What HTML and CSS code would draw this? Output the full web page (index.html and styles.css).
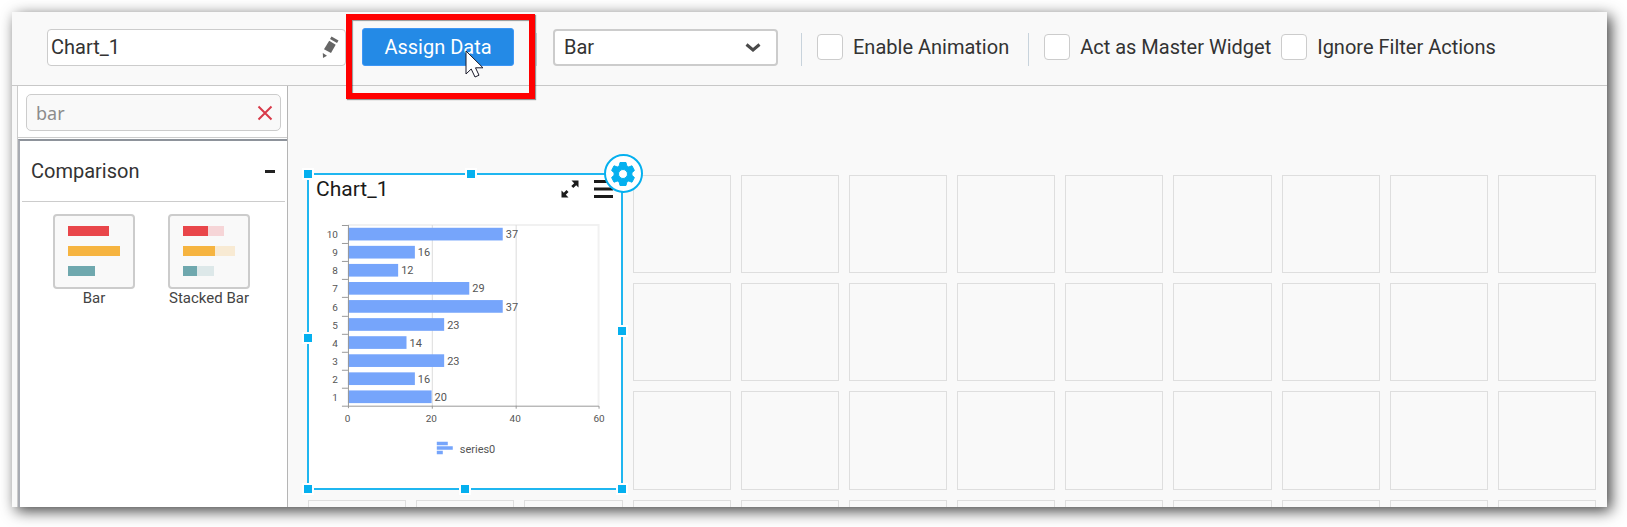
FILE: index.html
```html
<!DOCTYPE html>
<html lang="en">
<head>
<meta charset="utf-8">
<title>Dashboard Designer</title>
<link rel="stylesheet" href="styles.css">
</head>
<body>
<div class="window">
  <header class="toolbar">
    <div class="name-field">
      <input class="name-input" type="text" value="Chart_1" aria-label="Widget name">
      <svg class="pencil" width="18" height="24" viewBox="0 0 18 24" fill="#666" aria-hidden="true">
        <path d="M9.500 .5 16.500 4.500 15 7 8 3z"/><path d="M7.200 4.800 13.700 8.700 9 17 2 13.200z"/><path d="M.8 17 5 19.800 1 22z"/>
      </svg>
    </div>
    <div class="assign">
      <button class="assign-button" type="button">Assign Data</button>
      <span class="highlight"></span>
      <svg class="cursor" width="20" height="29" viewBox="0 0 20 29" aria-hidden="true">
        <path d="M1 1V24L6.200 19 10 27 14 25.200 10.500 17.800H18z" fill="#fff" stroke="#1a1a2a" stroke-width="1"/>
      </svg>
    </div>
    <span class="separator"></span>
    <div class="type-field">
      <select class="type-select" aria-label="Chart type"><option>Bar</option><option>Stacked Bar</option></select>
      <svg class="chevron" width="16" height="10" viewBox="0 0 16 10" aria-hidden="true"><path d="M1.500 1.500 8 7l6.500-5.500" fill="none" stroke="#4a4a4a" stroke-width="3"/></svg>
    </div>
    <span class="separator"></span>
    <label class="option"><input class="check" type="checkbox">Enable Animation</label>
    <span class="separator"></span>
    <label class="option"><input class="check" type="checkbox">Act as Master Widget</label>
    <label class="option"><input class="check" type="checkbox">Ignore Filter Actions</label>
  </header>
  <div class="workspace">
    <aside class="sidebar">
      <div class="search">
        <div class="search-box">
          <input class="search-input" type="text" value="bar" aria-label="Search widgets">
          <button class="clear" type="button" aria-label="Clear search">
            <svg width="16" height="16" viewBox="0 0 16 16"><path d="M1.500 1.500 14.500 14.500M14.500 1.500 1.500 14.500" stroke="#d83a4a" stroke-width="2"/></svg>
          </button>
        </div>
      </div>
      <section class="catalog">
        <h2 class="group-title">Comparison
          <button class="collapse" type="button" aria-label="Collapse Comparison"><svg width="10" height="3" viewBox="0 0 10 3"><path d="M0 0h10v3H0z" fill="#222"/></svg></button>
        </h2>
        <div class="tiles">
          <button class="tile" type="button">
            <span class="thumb">
              <svg width="55" height="51" viewBox="0 0 55 51">
                <path d="M0 0h41v10H0z" fill="#e9464a"/><path d="M0 20h52v10H0z" fill="#f6b440"/><path d="M0 40h27v10H0z" fill="#6fa8ae"/>
              </svg>
            </span>
            Bar
          </button>
          <button class="tile" type="button">
            <span class="thumb">
              <svg width="55" height="51" viewBox="0 0 55 51">
                <path d="M0 0h41v10H0z" fill="#f6d5d7"/><path d="M0 20h52v10H0z" fill="#f8ead3"/><path d="M0 40h31v10H0z" fill="#dde8e9"/>
                <path d="M0 0h25v10H0z" fill="#e9464a"/><path d="M0 20h32v10H0z" fill="#f6b440"/><path d="M0 40h14v10H0z" fill="#6fa8ae"/>
              </svg>
            </span>
            Stacked Bar
          </button>
        </div>
      </section>
    </aside>
    <main class="canvas">
      <div class="grid" id="grid">
        <article class="widget">
          <div class="widget-head">
            <h3 class="widget-title">Chart_1</h3>
            <button class="icon-button" type="button" aria-label="Maximize">
              <svg width="18" height="18" viewBox="0 0 18 18" fill="#1a1a1a"><path d="M10.500 .5h7v7l-2.300-2.300-2.900 2.900-2-2 2.900-2.900z"/><path d="M7.500 17.500h-7v-7l2.300 2.300 2.700-2.700 2 2-2.700 2.700z"/></svg>
            </button>
            <button class="icon-button" type="button" aria-label="Widget menu">
              <svg width="19" height="18" viewBox="0 0 19 18" fill="#1a1a1a"><path d="M0 0h19v3H0zM0 7.500h19v3H0zM0 15h19v3H0z"/></svg>
            </button>
          </div>
          <svg class="chart" id="chart" viewBox="309 216 312 250" role="img" aria-label="Bar chart of series0"></svg>
          <i class="handle top-left"></i><i class="handle top"></i><i class="handle left"></i><i class="handle right"></i>
          <i class="handle bottom-left"></i><i class="handle bottom"></i><i class="handle bottom-right"></i>
          <button class="settings" type="button" aria-label="Widget settings">
            <svg width="24" height="24" viewBox="0 0 24 24"><path fill="#05b0ef" fill-rule="evenodd" stroke="#05b0ef" stroke-linejoin="round" d="M9 .5h6l.7 3.300 2 1.200 3.300-1.200 2.400 4.700-2.500 2.200v2.600l2.500 2.200L21 20.200 17.700 19l-2 1.200-.7 3.300H9l-.7-3.300-2-1.200L3 20.200.6 15.500l2.500-2.200v-2.600L.6 8.500 3 3.800 6.300 5l2-1.200zM12 7.500a4.500 4.500 0 1 0 0 9 4.500 4.500 0 0 0 0-9z"/></svg>
          </button>
        </article>
      </div>
    </main>
  </div>
</div>
<script src="script.js"></script>
</body>
</html>
```
FILE: styles.css
```css
* { box-sizing: border-box; }
body { margin: 0; padding: 12px 20px 20px 12px; height: 100vh; background: #fff; color: #333; font-family: Roboto, "Liberation Sans", sans-serif; font-size: 20px; }
button, input, select { font: inherit; color: inherit; margin: 0; }
button { border: 0; padding: 0; background: none; }
svg { display: block; }
.window { height: 100%; display: flex; flex-direction: column; background: #f9f9f9; box-shadow: 4px 4px 14px rgba(0, 0, 0, .75); }

.toolbar { display: flex; align-items: center; padding: 16px 16px 19px 35px; border-bottom: 1px solid #c8c8c8; }
.name-field, .type-field { position: relative; }
.name-field { flex: 0 0 299px; }
.name-input, .type-select { display: block; width: 100%; height: 37px; border: 1px solid #ccc; border-radius: 4px; background: #fff; }
.name-input { padding: 0 36px 0 3px; }
.pencil { position: absolute; right: 6px; top: 7px; }
.assign { position: relative; margin: 0 22px 0 16px; }
.assign-button { display: block; width: 152px; height: 38px; border: 1px solid #3d96f5; border-radius: 3px; background: #248ae6; color: #fff; }
.highlight { position: absolute; inset: -14px -21px -33px -16px; border: 6px solid #f00; box-shadow: 1px 1px 1px rgba(0, 0, 0, .4), inset 1px 1px 1px rgba(0, 0, 0, .4); pointer-events: none; }
.cursor { position: absolute; left: 103px; top: 22px; }
.separator { flex: none; width: 1px; height: 33px; margin-top: 4px; background: #c8d3dc; }
.type-field { flex: 0 0 225px; margin: 0 23px 0 16px; }
.type-select { appearance: none; padding: 0 36px 0 9px; border-width: 2px; }
.chevron { position: absolute; right: 17px; top: 14px; pointer-events: none; }
.option { display: flex; align-items: center; gap: 10px; margin-left: 15px; white-space: nowrap; line-height: 24px; }
.option + .separator { margin-left: 19px; }
.option + .option { margin-left: 10px; }
.check { appearance: none; width: 26px; height: 26px; border: 1px solid #ccc; border-radius: 4px; background: #fff; }

.workspace { flex: 1; min-height: 0; display: flex; }
.sidebar { flex: 0 0 271px; min-width: 0; display: flex; flex-direction: column; margin-left: 5px; border-left: 1px solid #ccc; border-right: 1px solid #b5b5b5; background: #fff; }
.search { padding: 8px 6px 6px 8px; border-bottom: 1px solid #ccc; }
.search-box { display: flex; align-items: center; height: 37px; padding: 0 7px 0 9px; border: 1px solid #ccc; border-radius: 5px; background: #f9f9f9; }
.search-input { flex: 1; min-width: 0; padding: 0; border: 0; background: none; color: #8c8c8c; font-size: 18px; font-family: "Noto Sans", sans-serif; }
.catalog { flex: 1; margin-top: 1px; padding: 0 2px; border-top: 2px solid #8e939b; border-left: 2px solid #a8abb2; }
.group-title { display: flex; align-items: center; justify-content: space-between; height: 61px; margin: 0; padding: 0 10px 0 9px; border-bottom: 1px solid #ccc; font-size: 20px; font-weight: 400; }
.tiles { display: flex; gap: 27px; padding: 12px 0 0 28px; }
.tile { width: 88px; display: flex; flex-direction: column; align-items: center; font-size: 15px; line-height: 18px; white-space: nowrap; color: #444; }
.thumb { width: 82px; height: 75px; padding: 10px 13px; border: 2px solid #ccc; border-radius: 4px; background: #f9f9f9; }

.canvas { flex: 1; min-width: 0; overflow: hidden; padding: 89px 11px 0 20px; }
.grid { display: grid; grid-template-columns: repeat(12, 1fr); gap: 10px; }
.cell { aspect-ratio: 1; border: 1px solid #dedede; }
.widget { position: relative; grid-area: 1 / 1 / 4 / 4; margin: -2px 0 0 -1px; border: 2px solid #1fb6f0; background: #fff; }
.widget-head { display: flex; align-items: center; gap: 15px; padding: 0 8px 0 7px; height: 28px; }
.widget-title { flex: 1; margin: 0; font-size: 21px; font-weight: 400; color: #1a1a1a; }
.chart { width: 100%; margin-top: 13px; }
.grid-line { stroke: #dcdcdc; }
.plot-edge { stroke: #f1f1f1; stroke-width: 2; fill: none; }
.axis { stroke: #999; fill: none; }
.bar { fill: #76a5fb; }
.axis-label { font-size: 10px; fill: #555; }
.value-label { font-size: 11px; fill: #555; }
.handle { position: absolute; width: 12px; height: 12px; border: 2px solid #fff; background: #05b0ef; transform: translate(-50%, -50%); }
.top-left { left: -1px; top: -1px; }
.top { left: 52%; top: -1px; }
.left { left: -1px; top: 52%; }
.right { left: calc(100% + 1px); top: 50%; }
.bottom-left { left: -1px; top: calc(100% + 1px); }
.bottom { left: 50%; top: calc(100% + 1px); }
.bottom-right { left: calc(100% + 1px); top: calc(100% + 1px); }
.settings { position: absolute; right: -22px; top: -21px; width: 39px; height: 39px; display: grid; place-items: center; border: 2px solid #05b0ef; border-radius: 50%; background: #fff; }
```
FILE: script.js
```js
const grid = document.getElementById('grid');
const chart = document.getElementById('chart');
const ns = 'http://www.w3.org/2000/svg';

for (let i = 0; i < 9 * 3 + 12; i++) {
  const cell = document.createElement('div');
  cell.className = 'cell';
  grid.append(cell);
}

function draw(tag, attrs, text) {
  const node = document.createElementNS(ns, tag);
  for (const key in attrs) node.setAttribute(key, attrs[key]);
  if (text !== undefined) node.textContent = text;
  chart.append(node);
}

const values = [37, 16, 12, 29, 37, 23, 14, 23, 16, 20];
const left = 348, top0 = 225, step = 18.1, unit = 4.19;
const bottom = 406;

draw('path', { class: 'plot-edge', d: `M${left} ${top0}H599V${bottom}` });
for (const x of [432.5, 516.5]) draw('path', { class: 'grid-line', d: `M${x} ${top0}V${bottom}` });
values.forEach((value, i) => {
  const y = top0 + i * step;
  draw('rect', { class: 'bar', x: left, y: y + 2.8, width: value * unit, height: 12.7 });
  draw('text', { class: 'axis-label', x: 338, y: y + 13.3, 'text-anchor': 'end' }, 10 - i);
  draw('text', { class: 'value-label', x: left + value * unit + 3, y: y + 13.3 }, value);
});
let axis = `M348.5 ${top0}V408.5M342 406.5H599.5V409M432.5 406V409M516.5 406V409`;
for (let i = 0; i < 10; i++) axis += `M342 ${Math.round(top0 + i * step) + 0.5}H348`;
draw('path', { class: 'axis', d: axis });
[0, 20, 40, 60].forEach((n, i) => draw('text', { class: 'axis-label', x: 347.5 + i * 84, y: 422, 'text-anchor': 'middle' }, n));
draw('path', { class: 'bar', d: 'M437 442h11v3.500h-11zM437 446.700h16v3.300h-16zM437 451.200h6v3.300h-6z' });
draw('text', { class: 'value-label', x: 460, y: 453 }, 'series0');
```
